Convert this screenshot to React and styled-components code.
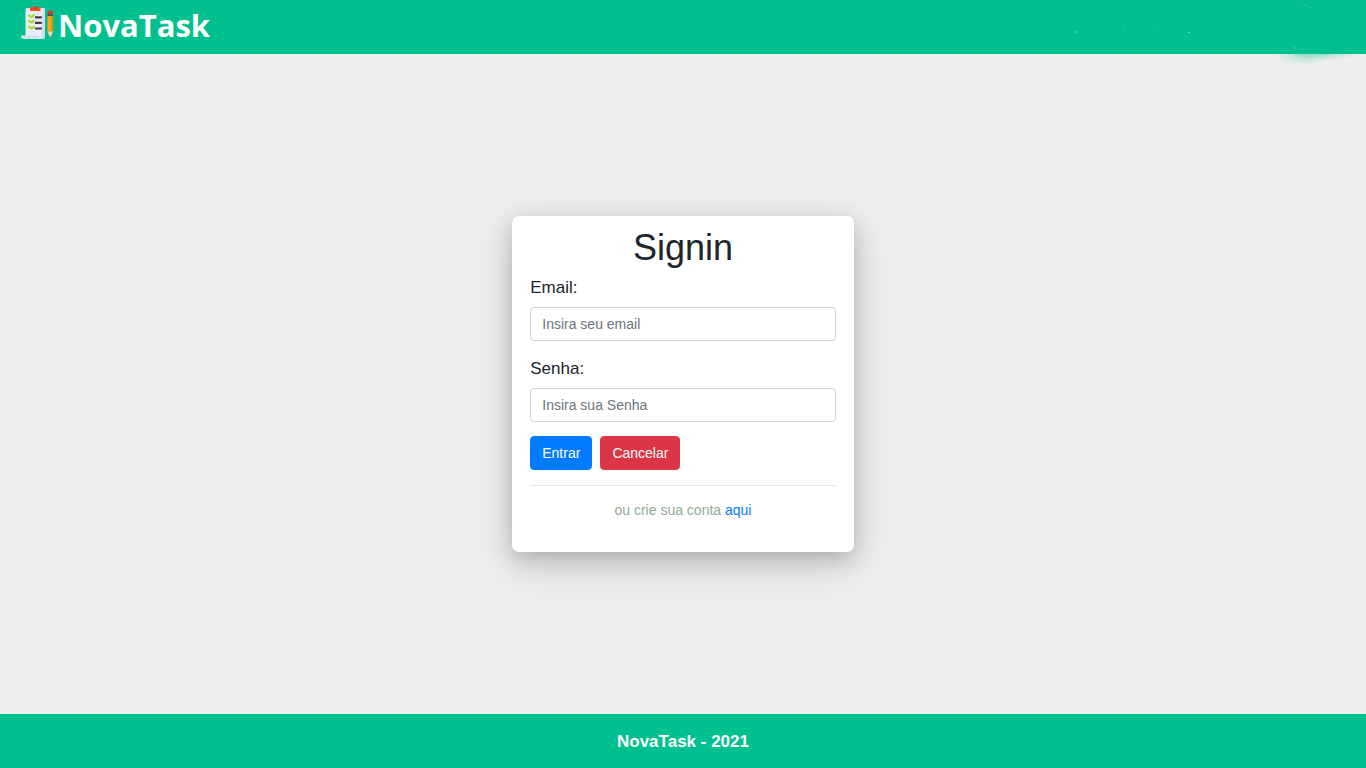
import React from "react";
import styled, { createGlobalStyle } from "styled-components";

const GlobalStyle = createGlobalStyle`
  *, *::before, *::after { box-sizing: border-box; }
  body {
    margin: 0;
    background: #eeeeee;
    color: #212529;
    font-family: "Liberation Sans", Arial, sans-serif;
    font-size: 14px;
    line-height: 21px;
  }
`;

const Page = styled.div`
  display: flex;
  flex-direction: column;
  min-height: 100vh;
`;

const Header = styled.header`
  position: relative;
  display: flex;
  align-items: flex-start;
  height: 54px;
  padding: 0 20px;
  background: #00c08f;
`;

const Brand = styled.a`
  display: flex;
  align-items: flex-start;
  gap: 4px;
  padding-top: 4px;
  color: #ffffff;
  font-family: "Open Sans", "Noto Sans", sans-serif;
  font-size: 31px;
  font-weight: 700;
  line-height: 42px;
  text-decoration: none;
`;

const BrandIcon = styled.svg`
  width: 34px;
  height: 34px;
  margin-top: 2px;
`;

const Smudge = styled.svg`
  position: absolute;
  top: 0;
  right: 0;
  width: 326px;
  height: 70px;
  pointer-events: none;
`;

const Main = styled.main`
  flex: 1;
  display: flex;
  align-items: center;
  justify-content: center;
`;

const Card = styled.form`
  width: 25%;
  min-width: 300px;
  padding: 11px 18px 31px;
  border-radius: 7px;
  background: #ffffff;
  box-shadow: 0 7px 21px rgba(0, 0, 0, 0.2), 0 14px 48px rgba(0, 0, 0, 0.12);
`;

const Title = styled.h1`
  margin: 0 0 5px;
  font-size: 36px;
  font-weight: 400;
  line-height: 42px;
  text-align: center;
`;

const Field = styled.div`
  display: flex;
  flex-direction: column;
  gap: 5px;
  margin-bottom: 14px;
`;

const Label = styled.label`
  font-size: 17px;
  line-height: 28px;
`;

const Input = styled.input`
  width: 100%;
  height: 34px;
  padding: 0 11px;
  border: 1px solid #ced4da;
  border-radius: 4px;
  background: #ffffff;
  color: #495057;
  font: inherit;

  &::placeholder {
    color: #6c757d;
    opacity: 1;
  }
`;

const Actions = styled.div`
  display: flex;
  gap: 8px;
`;

const Button = styled.button`
  height: 34px;
  padding: 0 11px;
  border: 1px solid ${(p) => p.$color};
  border-radius: 4px;
  background: ${(p) => p.$color};
  color: #ffffff;
  font: inherit;
  cursor: pointer;
`;

const Divider = styled.hr`
  margin: 15px 0 14px;
  border: 0;
  border-top: 1px solid #e5e5e5;
`;

const Hint = styled.p`
  margin: 0;
  color: #8fab95;
  text-align: center;
`;

const Link = styled.a`
  color: #007bff;
  text-decoration: none;
`;

const Footer = styled.footer`
  display: flex;
  align-items: center;
  justify-content: center;
  height: 54px;
  background: #00c08f;
  color: #ffffff;
  font-size: 17px;
  font-weight: 700;
`;

function ClipboardIcon() {
  return (
    <BrandIcon viewBox="0 0 34 34" aria-hidden="true">
      <path d="M5.500 3.500Q5.500 2 7 2H23.500Q25 2 25 3.500V30.500Q25 33 22.500 33H5.500Z" fill="#e9edf7" />
      <path d="M22.500 2h1Q25 2 25 3.500V30.500Q25 33 22.500 33H21.500Z" fill="#d5dceb" />
      <path d="M1 29.500H18.500Q19 33 22.500 33H4Q1 33 1 29.500Z" fill="#d8dfec" />
      <path d="M10 2.500Q10 1.200 11 1.200H19.500Q20.500 1.200 20.500 2.500V5H10Z" fill="#f4511e" />
      <path d="M13 1.500Q13.500 0.500 15.200 0.500T17.500 1.500V3H13Z" fill="#d9421c" />
      <g fill="none" stroke="#a4de2c" strokeWidth="2.200" strokeLinecap="round" strokeLinejoin="round">
        <path d="M9 9.300l2.300 1.800 2.600-1.900" />
        <path d="M9 14.900l2.300 1.800 2.600-1.900" />
        <path d="M9 20.700l2.300 1.800 2.600-1.900" />
      </g>
      <g stroke="#4b3350" strokeWidth="2.200" strokeLinecap="round">
        <path d="M15.800 11.300h5.200M15.800 16.900h5.200M15.800 22.500h5.200" />
      </g>
      <path d="M27.500 6.500Q27.500 4.500 30.200 4.500T33 6.500V8.500H27.500Z" fill="#d93a20" />
      <path d="M27.500 8.200H33V10.300H27.500Z" fill="#5b4a5e" />
      <path d="M27.500 10.200H33V25.500H27.500Z" fill="#ffa412" />
      <path d="M31.200 10.200H33V25.500H31.200Z" fill="#e98a0b" />
      <path d="M27.500 25.500H33L31 31H29.500Z" fill="#f6d5ac" />
      <path d="M29.700 30H30.900L30.300 32Z" fill="#8a7068" />
    </BrandIcon>
  );
}

function HeaderSmudge() {
  return (
    <Smudge viewBox="0 0 326 70" aria-hidden="true">
      <defs>
        <radialGradient id="haze">
          <stop offset="0" stopColor="#00c08f" stopOpacity="0.3" />
          <stop offset="0.500" stopColor="#00c08f" stopOpacity="0.14" />
          <stop offset="1" stopColor="#00c08f" stopOpacity="0" />
        </radialGradient>
        <clipPath id="below">
          <rect x="0" y="54" width="326" height="16" />
        </clipPath>
      </defs>
      <g clipPath="url(#below)">
        <ellipse cx="263" cy="54" rx="30" ry="12" fill="url(#haze)" />
        <ellipse cx="285" cy="54" rx="34" ry="6" fill="url(#haze)" />
      </g>
      <g fill="#5fd9b8">
        <rect x="35" y="31" width="2" height="2" opacity="0.600" />
        <rect x="84" y="26" width="1" height="2" opacity="0.600" />
        <rect x="118" y="26" width="2" height="1" opacity="0.350" />
        <rect x="148" y="32" width="2" height="1" />
        <rect x="254" y="47" width="2" height="2" opacity="0.500" />
        <rect x="259" y="49" width="3" height="1" opacity="0.300" />
        <rect x="267" y="49" width="2" height="1" opacity="0.300" />
      </g>
      <path d="M259 6Q265 4 273 8" fill="none" stroke="#5fd9b8" opacity="0.250" />
    </Smudge>
  );
}

export default function App() {
  return (
    <>
      <GlobalStyle />
      <Page>
        <Header>
          <Brand href="#">
            <ClipboardIcon />
            NovaTask
          </Brand>
          <HeaderSmudge />
        </Header>
        <Main>
          <Card onSubmit={(e) => e.preventDefault()}>
            <Title>Signin</Title>
            <Field>
              <Label htmlFor="email">Email:</Label>
              <Input id="email" type="email" placeholder="Insira seu email" />
            </Field>
            <Field>
              <Label htmlFor="password">Senha:</Label>
              <Input id="password" type="password" placeholder="Insira sua Senha" />
            </Field>
            <Actions>
              <Button type="submit" $color="#007bff">Entrar</Button>
              <Button type="button" $color="#dc3545">Cancelar</Button>
            </Actions>
            <Divider />
            <Hint>
              ou crie sua conta <Link href="#">aqui</Link>
            </Hint>
          </Card>
        </Main>
        <Footer>NovaTask - 2021</Footer>
      </Page>
    </>
  );
}
